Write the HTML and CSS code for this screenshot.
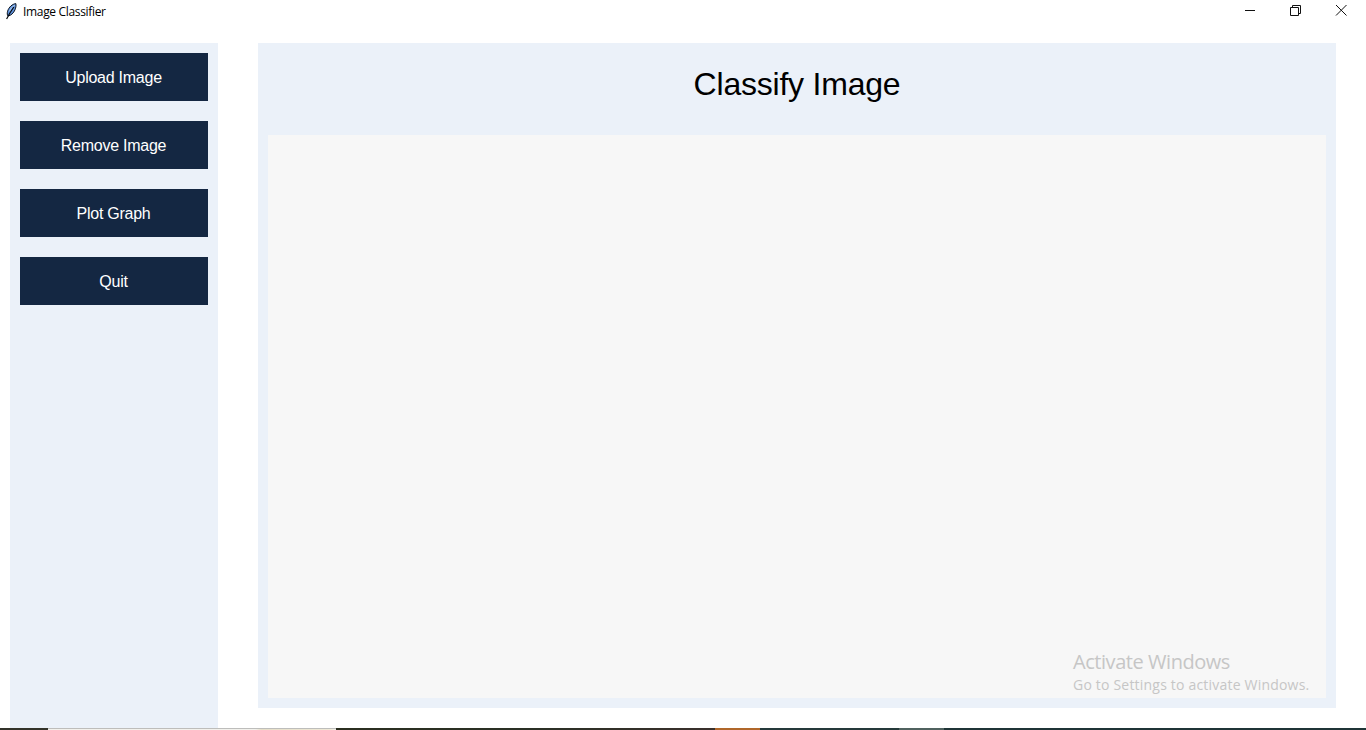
FILE: index.html
```html
<!DOCTYPE html>
<html lang="en">
<head>
<meta charset="utf-8">
<title>Image Classifier</title>
<link rel="stylesheet" href="styles.css">
</head>
<body>
<div class="window">
  <header class="titlebar">
    <div class="title-left">
      <svg class="feather" width="12" height="17" viewBox="0 0 12 17">
        <path d="M10.8 .6C7.5 1 3.8 4 2.6 8.2 2 10.4 2.2 12 3 13 6 12.6 8.6 10 10 6.8 10.9 4.6 11.3 2.4 10.8 .6Z" fill="#5f92dc" stroke="#0b1420" stroke-width="1"/>
        <path d="M9.6 2.4C7.2 3.6 5.4 5.8 4.6 8.2" fill="none" stroke="#bcd6f6" stroke-width="1"/>
        <path d="M8.8 4 4.6 10.5 1.6 16" fill="none" stroke="#05080c" stroke-width="1.2"/>
      </svg>
      <span class="title-text">Image Classifier</span>
    </div>
    <div class="controls">
      <svg class="ctl" width="46" height="22" viewBox="0 0 46 22"><path d="M19 10.5H29" stroke="#111" stroke-width="1"/></svg>
      <svg class="ctl" width="46" height="22" viewBox="0 0 46 22"><path d="M18.5 7.5H26.5V15.5H18.5ZM20.5 7.5V5.5H28.5V13.5H26.5" fill="none" stroke="#111" stroke-width="1"/></svg>
      <svg class="ctl" width="46" height="22" viewBox="0 0 46 22"><path d="M18 5L28.5 15.5M28.5 5L18 15.5" stroke="#111" stroke-width="1"/></svg>
    </div>
  </header>
  <div class="content">
    <aside class="sidebar">
      <button class="btn">Upload Image</button>
      <button class="btn">Remove Image</button>
      <button class="btn">Plot Graph</button>
      <button class="btn">Quit</button>
    </aside>
    <main class="main">
      <h1 class="heading">Classify Image</h1>
      <div class="canvas">
        <div class="watermark">
          <div class="wm-title">Activate Windows</div>
          <div class="wm-sub">Go to Settings to activate Windows.</div>
        </div>
      </div>
    </main>
  </div>
  <footer class="taskbar">
    <i class="seg seg-a"></i><i class="seg seg-b"></i><i class="seg seg-c"></i><i class="seg seg-d"></i><i class="seg seg-e"></i><i class="seg seg-f"></i><i class="seg seg-g"></i>
  </footer>
</div>
</body>
</html>
```

FILE: styles.css
```css
* { box-sizing: border-box; }
html, body { margin: 0; height: 100%; background: #fff; overflow: hidden; }
.window { display: flex; flex-direction: column; width: 1366px; height: 730px; }
.titlebar { height: 43px; flex: none; display: flex; justify-content: space-between; align-items: flex-start; }
.title-left { display: flex; align-items: center; height: 22px; padding: 1px 0 0 5px; }
.feather { display: block; }
.title-text { margin-left: 6px; font: 12px/16px "Open Sans", "Noto Sans", sans-serif; letter-spacing: -.33px; color: #000; }
.controls { display: flex; margin-right: 2px; }
.ctl { display: block; }
.content { flex: 1; display: flex; align-items: stretch; padding-left: 10px; min-height: 0; }
.sidebar { width: 208px; flex: none; background: #ebf1f9; padding: 10px; display: flex; flex-direction: column; gap: 20px; }
.btn { height: 48px; width: 188px; border: 0; padding: 2px 1px 0 0; background: #142742; color: #fff; font: 16px "Liberation Sans", Arial, sans-serif; letter-spacing: -.25px; }
.main { width: 1078px; margin-left: 40px; margin-bottom: 20px; background: #ebf1f9; padding: 0 10px 10px; display: flex; flex-direction: column; }
.heading { height: 92px; margin: 0; flex: none; text-align: center; font: 400 32px/82px "Liberation Sans", Arial, sans-serif; letter-spacing: -.22px; color: #000; }
.canvas { flex: 1; background: #f7f7f7; position: relative; }
.watermark { position: absolute; left: 805px; top: 514px; white-space: nowrap; font-family: "Open Sans", "Noto Sans", sans-serif; color: #c6c6c6; }
.wm-title { font-size: 20px; line-height: 26px; letter-spacing: -.45px; }
.wm-sub { font-size: 14px; line-height: 20px; letter-spacing: .2px; }
.taskbar { height: 2px; flex: none; display: flex; }
.seg { display: block; height: 2px; }
.seg-a { width: 48px; background: #33332a; }
.seg-b { width: 288px; background: linear-gradient(90deg, #f2f1ec 72%, #e6dfc8 74%, #efe9d6 98%, #f2f1ec); border-top: 1px solid #bdbdbb; }
.seg-c { width: 379px; background: linear-gradient(90deg, #2b2f20, #2a3025 50%, #3a302c); }
.seg-d { width: 45px; background: #b0672a; }
.seg-e { width: 139px; background: #25393a; }
.seg-f { width: 45px; background: #50625f; }
.seg-g { width: 422px; background: #1f3436; }
```
